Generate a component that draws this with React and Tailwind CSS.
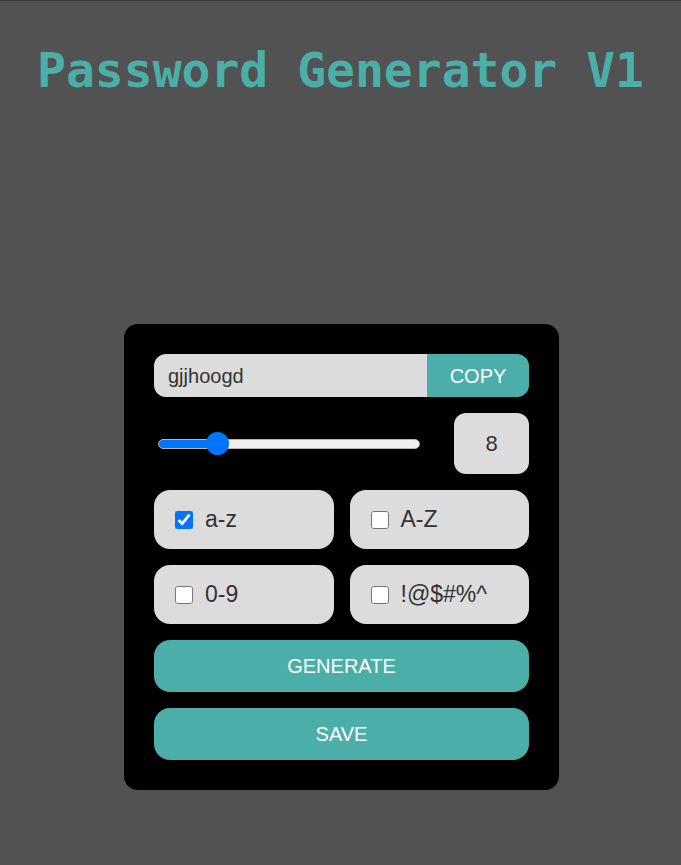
import React, { useState } from 'react';

const sans = { fontFamily: '"Liberation Sans", Arial, sans-serif' };

function Option({ label, checked, onChange }) {
  return (
    <label className="flex items-center h-[59px] rounded-[16px] bg-[#dcdcdc] pl-[21px] cursor-pointer">
      <input
        type="checkbox"
        checked={checked}
        onChange={onChange}
        className="w-[18px] h-[18px] m-0 accent-[#0075ff]"
      />
      <span className="ml-[12px] text-[23px] text-[#333]">{label}</span>
    </label>
  );
}

export default function App() {
  const [length, setLength] = useState(8);
  const [opts, setOpts] = useState({ lower: true, upper: false, digits: false, symbols: false });
  const min = 4;
  const max = 24;
  const pct = ((length - min) / (max - min)) * 100;

  const toggle = (key) => setOpts({ ...opts, [key]: !opts[key] });

  return (
    <div className="min-h-[865px] bg-[#525252] border-t border-[#3b3b3b] flex flex-col items-center" style={sans}>
      <h1
        className="mt-[37px] text-[48px] leading-[64px] text-[#4aafa8] font-bold"
        style={{ fontFamily: '"DejaVu Sans Mono", "Liberation Mono", monospace' }}
      >
        Password Generator V1
      </h1>

      <div className="mt-[222px] ml-[2px] w-[435px] bg-black rounded-[14px] p-[30px] flex flex-col gap-[16px]">
        {/* password + copy */}
        <div className="flex h-[43px] rounded-[12px] overflow-hidden">
          <input
            readOnly
            value="gjjhoogd"
            className="flex-1 min-w-0 bg-[#dcdcdc] px-[14px] text-[20px] text-[#333] outline-none"
          />
          <button className="w-[102px] bg-[#4caea8] text-white text-[20px]">COPY</button>
        </div>

        {/* length slider */}
        <div className="flex items-center justify-between">
          <input
            type="range"
            min={min}
            max={max}
            value={length}
            onChange={(e) => setLength(Number(e.target.value))}
            className="ml-[4px] w-[262px] h-[10px] appearance-none rounded-full border border-[#b5b5b5] outline-none [&::-webkit-slider-thumb]:appearance-none [&::-webkit-slider-thumb]:w-[23px] [&::-webkit-slider-thumb]:h-[23px] [&::-webkit-slider-thumb]:rounded-full [&::-webkit-slider-thumb]:bg-[#0075ff] [&::-webkit-slider-thumb]:border-0"
            style={{ background: `linear-gradient(to right, #0075ff ${pct}%, #efefef ${pct}%)` }}
          />
          <div className="w-[75px] h-[61px] rounded-[12px] bg-[#dcdcdc] flex items-center justify-center text-[22px] text-[#333]">
            {length}
          </div>
        </div>

        {/* character sets */}
        <div className="grid grid-cols-2 gap-[16px]">
          <Option label="a-z" checked={opts.lower} onChange={() => toggle('lower')} />
          <Option label="A-Z" checked={opts.upper} onChange={() => toggle('upper')} />
          <Option label="0-9" checked={opts.digits} onChange={() => toggle('digits')} />
          <Option label="!@$#%^" checked={opts.symbols} onChange={() => toggle('symbols')} />
        </div>

        <button className="h-[52px] rounded-[16px] bg-[#4caea8] text-white text-[20px]">GENERATE</button>
        <button className="h-[52px] rounded-[16px] bg-[#4caea8] text-white text-[20px]">SAVE</button>
      </div>
    </div>
  );
}
